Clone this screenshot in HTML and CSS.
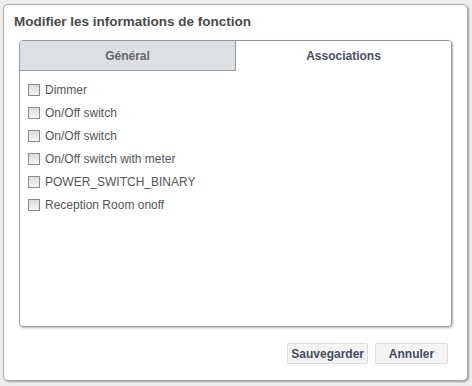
FILE: index.html
```html
<!DOCTYPE html>
<html lang="fr">
<head>
    <meta charset="UTF-8">
    <title>Modifier les informations de fonction</title>
    <link rel="stylesheet" href="styles.css">
</head>
<body>
    <div class="dialog">
        <h1 class="dialog-title">Modifier les informations de fonction</h1>
        <div class="tabs">
            <div class="tab-bar">
                <div class="tab">Général</div>
                <div class="tab active">Associations</div>
            </div>
            <div class="tab-body">
                <label class="item"><input type="checkbox"> Dimmer</label>
                <label class="item"><input type="checkbox"> On/Off switch</label>
                <label class="item"><input type="checkbox"> On/Off switch</label>
                <label class="item"><input type="checkbox"> On/Off switch with meter</label>
                <label class="item"><input type="checkbox"> POWER_SWITCH_BINARY</label>
                <label class="item"><input type="checkbox"> Reception Room onoff</label>
            </div>
        </div>
        <div class="actions">
            <button class="btn">Sauvegarder</button>
            <button class="btn">Annuler</button>
        </div>
    </div>
</body>
</html>
```

FILE: styles.css
```css
body, html {
    margin: 0;
    padding: 0;
    font-family: "Liberation Sans", Arial, sans-serif;
    background: #eeeeee;
}
body {
    padding: 4px 4px 0 3px;
    height: 386px;
    box-sizing: border-box;
}

.dialog {
    width: 465px;
    height: 377px;
    box-sizing: border-box;
    background: #fff;
    border: 1px solid #a9a9a9;
    border-radius: 5px;
    box-shadow: 1px 1px 2px rgba(0, 0, 0, 0.35);
    padding: 0 15px;
    display: flex;
    flex-direction: column;
}
.dialog-title {
    margin: 0 0 0 -5px;
    padding-top: 9px;
    height: 26px;
    font-size: 13.5px;
    font-weight: bold;
    color: #4a4a4a;
}

/* Tabs */
.tabs {
    height: 287px;
    box-sizing: border-box;
    border: 1px solid #999;
    border-radius: 4px;
    box-shadow: 1px 1px 2px rgba(0, 0, 0, 0.3);
    display: flex;
    flex-direction: column;
    overflow: hidden;
}
.tab-bar {
    display: flex;
    height: 30px;
}
.tab {
    flex: 1;
    display: flex;
    align-items: center;
    justify-content: center;
    font-size: 12px;
    font-weight: bold;
    color: #555;
}
.tab:first-child {
    background: #dde0e3;
    border-right: 1px solid #999;
    border-bottom: 1px solid #999;
    color: #666;
}
.tab.active {
    background: #fff;
    color: #4a5060;
}
.tab-body {
    padding: 7px 0 0 8px;
    display: flex;
    flex-direction: column;
}
.item {
    display: flex;
    align-items: center;
    height: 23px;
    font-size: 12px;
    color: #555;
}
.item input {
    appearance: none;
    width: 12px;
    height: 12px;
    margin: 0 5px 0 0;
    border: 1px solid #8a8a8a;
    background: linear-gradient(#dcdcdc, #f4f4f4);
    box-sizing: border-box;
}

/* Buttons */
.actions {
    display: flex;
    justify-content: flex-end;
    gap: 7px;
    padding: 16px 4px 0 0;
}
.btn {
    height: 21px;
    padding: 0 3px;
    font-family: "Liberation Sans", Arial, sans-serif;
    font-size: 12px;
    font-weight: bold;
    color: #444c5c;
    background: #f4f4f4;
    border: 1px solid #ddd;
    border-radius: 2px;
}
.btn:last-child {
    width: 73px;
}
```
